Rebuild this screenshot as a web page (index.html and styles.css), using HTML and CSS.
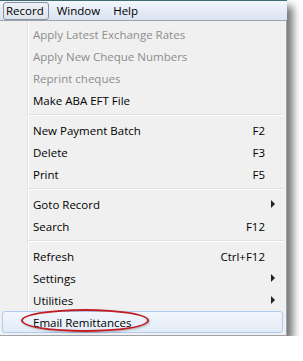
FILE: index.html
```html
<!DOCTYPE html>
<html lang="en">
<head>
    <meta charset="UTF-8">
    <title>Record menu</title>
    <link rel="stylesheet" href="styles.css">
</head>
<body>
    <div class="window">
        <!-- menu bar -->
        <div class="menubar">
            <span class="menubar-item active">Record</span>
            <span class="menubar-item">Window</span>
            <span class="menubar-item">Help</span>
        </div>

        <!-- dropdown -->
        <div class="menu">
            <div class="menu-item disabled"><span class="label">Apply Latest Exchange Rates</span></div>
            <div class="menu-item disabled"><span class="label">Apply New Cheque Numbers</span></div>
            <div class="menu-item disabled"><span class="label">Reprint cheques</span></div>
            <div class="menu-item"><span class="label">Make ABA EFT File</span></div>
            <div class="separator"></div>
            <div class="menu-item"><span class="label">New Payment Batch</span><span class="shortcut">F2</span></div>
            <div class="menu-item"><span class="label">Delete</span><span class="shortcut">F3</span></div>
            <div class="menu-item"><span class="label">Print</span><span class="shortcut">F5</span></div>
            <div class="separator"></div>
            <div class="menu-item"><span class="label">Goto Record</span><span class="arrow"></span></div>
            <div class="menu-item"><span class="label">Search</span><span class="shortcut">F12</span></div>
            <div class="separator"></div>
            <div class="menu-item"><span class="label">Refresh</span><span class="shortcut">Ctrl+F12</span></div>
            <div class="menu-item"><span class="label">Settings</span><span class="arrow"></span></div>
            <div class="menu-item"><span class="label">Utilities</span><span class="arrow"></span></div>
            <div class="menu-item hover">
                <span class="label">Email Remittances</span>
                <span class="callout"></span>
            </div>
        </div>
    </div>
</body>
</html>
```

FILE: styles.css
```css
* {
    margin: 0;
    padding: 0;
    box-sizing: border-box;
}

body {
    font-family: "Open Sans", "Noto Sans", Arial, sans-serif;
    font-size: 11.5px;
    color: #000;
    background: #ffffff;
}

.window {
    width: 287px;
    box-shadow: 6px 6px 8px rgba(0, 0, 0, 0.55);
}

/* menu bar */
.menubar {
    height: 20px;
    display: flex;
    align-items: center;
    padding-left: 3px;
    border-top: 1px solid #3f6b72;
    background: linear-gradient(to bottom, #f3f6fb 0%, #e6ecf6 50%, #dbe3f2 100%);
}

.menubar-item {
    height: 18px;
    line-height: 16px;
    padding: 0 4px 0 2px;
    margin-right: 5px;
    border: 1px solid transparent;
}

.menubar-item.active {
    border-color: #8592a6;
    border-radius: 3px;
    background: linear-gradient(to bottom, #eef1f6 0%, #dfe4ec 100%);
}

/* dropdown */
.menu {
    position: relative;
    border: 1px solid #9ea3ab;
    border-left: none;
    padding: 2px 0;
    background: #f0f0f0;
    background-image: linear-gradient(to right, transparent 27px, #e2e3e3 27px, #e2e3e3 28px, #ffffff 28px, #ffffff 29px, transparent 29px);
}

.menu-item {
    position: relative;
    height: 22px;
    display: flex;
    align-items: center;
    margin: 0 3px 0 2px;
    padding: 0 7px 0 30px;
    border: 1px solid transparent;
    border-radius: 3px;
}

.menu-item .label {
    flex: 1;
}

.menu-item.disabled {
    color: #8d8d8d;
}

.shortcut {
    text-align: right;
    margin-right: 10px;
}

.arrow {
    width: 0;
    height: 0;
    border-top: 4px solid transparent;
    border-bottom: 4px solid transparent;
    border-left: 4px solid #222;
}

.menu-item.hover {
    border-color: #aeccef;
    background: linear-gradient(to bottom, #f2f6fc 0%, #e2ebf7 100%);
}

.separator {
    height: 8px;
    margin-left: 28px;
    margin-right: 2px;
    background: linear-gradient(to bottom, transparent 3px, #e0e0e0 3px, #e0e0e0 4px, #ffffff 4px, #ffffff 5px, transparent 5px);
}

/* red annotation circle */
.callout {
    position: absolute;
    left: 18px;
    top: -3px;
    width: 128px;
    height: 23px;
    border: 2px solid #c01d25;
    border-radius: 50%;
    box-shadow: 1px 1px 2px rgba(0, 0, 0, 0.25);
}
```
